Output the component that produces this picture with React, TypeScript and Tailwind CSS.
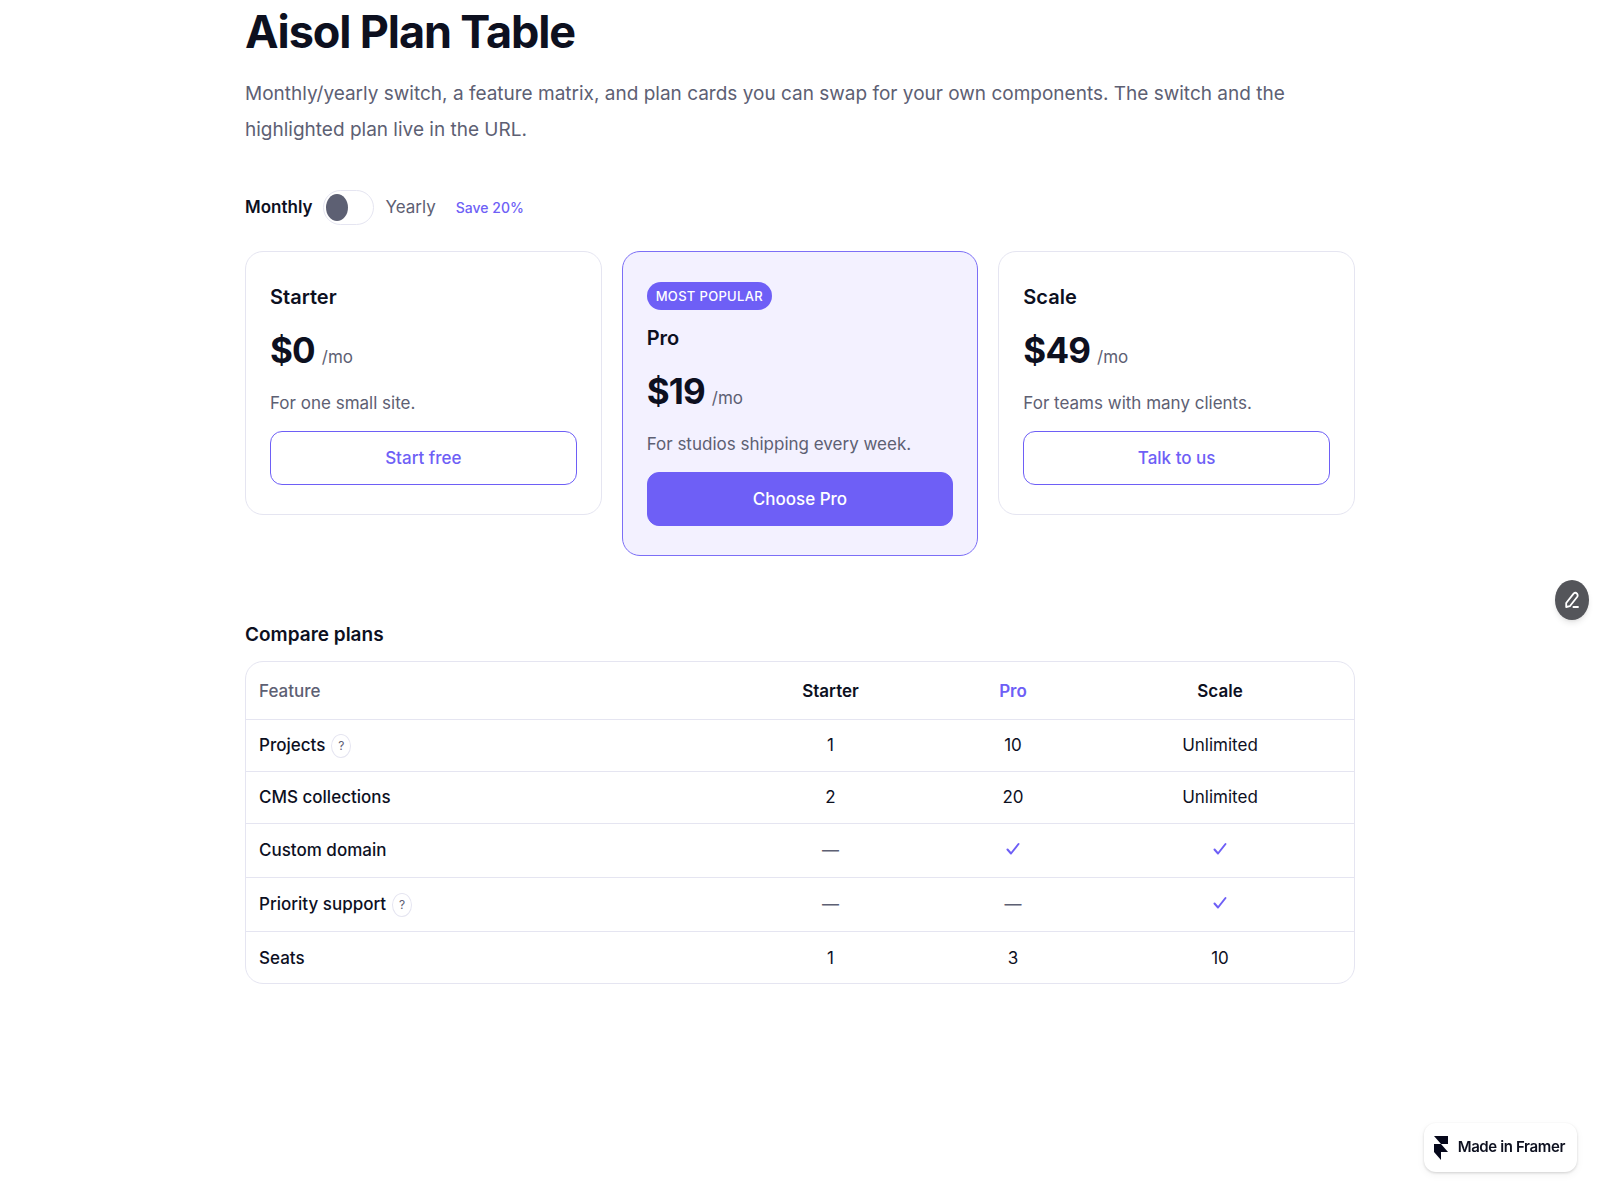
import { useState } from "react";

type Plan = {
  name: string;
  monthly: number;
  blurb: string;
  cta: string;
  popular?: boolean;
};

type Row = {
  feature: string;
  hint?: string;
  values: (string | boolean)[];
};

const PLANS: Plan[] = [
  { name: "Starter", monthly: 0, blurb: "For one small site.", cta: "Start free" },
  { name: "Pro", monthly: 19, blurb: "For studios shipping every week.", cta: "Choose Pro", popular: true },
  { name: "Scale", monthly: 49, blurb: "For teams with many clients.", cta: "Talk to us" },
];

const ROWS: Row[] = [
  { feature: "Projects", hint: "About projects", values: ["1", "10", "Unlimited"] },
  { feature: "CMS collections", values: ["2", "20", "Unlimited"] },
  { feature: "Custom domain", values: [false, true, true] },
  { feature: "Priority support", hint: "About priority support", values: [false, false, true] },
  { feature: "Seats", values: ["1", "3", "10"] },
];

function CheckIcon() {
  return (
    <svg
      width="18"
      height="20"
      viewBox="0 0 18 20"
      className="mx-auto mb-1"
      fill="none"
      stroke="#6e5ff6"
      strokeWidth="2"
      strokeLinecap="round"
      strokeLinejoin="round"
    >
      <path d="M3.5 10.5 7 14.5 14.5 5" />
    </svg>
  );
}

function Cell({ value }: { value: string | boolean }) {
  if (value === true) return <CheckIcon />;
  if (value === false) return <span className="text-[#5d6073]">—</span>;
  return <>{value}</>;
}

function PlanCard({ plan, yearly }: { plan: Plan; yearly: boolean }) {
  const price = yearly ? Math.round(plan.monthly * 0.8) : plan.monthly;
  return (
    <article
      className={`flex flex-col items-start gap-[13px] rounded-[18px] border px-6 pt-[30px] pb-[29px] ${
        plan.popular ? "border-[#7c6ff6] bg-[#f3f1ff]" : "border-[#e5e5f1] bg-white"
      }`}
    >
      {plan.popular && (
        <span className="rounded-[14px] bg-[#6e5ff6] px-[9px] text-[13px] leading-7 font-medium tracking-wide text-white uppercase">
          Most popular
        </span>
      )}
      <h2 className="text-[20px] leading-[30px] font-semibold">{plan.name}</h2>
      <p className="flex items-baseline gap-[7px]">
        <span className="text-[35px] leading-[50px] font-bold tracking-tight">${price}</span>
        <span className="text-[17px] leading-6 text-[#5d6073]">/mo</span>
      </p>
      <p className="text-[17px] leading-[30px] text-[#5d6073]">{plan.blurb}</p>
      <button
        type="button"
        className={`w-full rounded-xl border border-[#6e5ff6] text-[17px] leading-[52px] font-medium ${
          plan.popular ? "bg-[#6e5ff6] text-white" : "text-[#6e5ff6]"
        }`}
      >
        {plan.cta}
      </button>
    </article>
  );
}

export default function App() {
  const [yearly, setYearly] = useState(false);

  return (
    <div className="min-h-screen bg-white font-['Inter',sans-serif] text-[#0d101f]">
      <main className="mx-auto max-w-[1110px]">
        <h1 className="text-[45px] leading-[64px] font-bold tracking-tight">Aisol Plan Table</h1>
        <p className="mt-3 text-[19px] leading-9 text-[#5d6073]">
          Monthly/yearly switch, a feature matrix, and plan cards you can swap for your own components. The switch and
          the highlighted plan live in the URL.
        </p>

        <div className="mt-[42px] flex items-center text-[17px]">
          <span className={yearly ? "text-[#5d6073]" : "font-semibold"}>Monthly</span>
          <input
            type="checkbox"
            role="switch"
            aria-label="Yearly billing"
            checked={yearly}
            onChange={(e) => setYearly(e.target.checked)}
            className="mx-[11px] flex h-[35px] w-[51px] appearance-none items-center rounded-[18px] border border-[#e5e5f1] px-[2px] before:h-[27px] before:w-[22px] before:rounded-[50%] before:bg-[#5d6073] checked:justify-end"
          />
          <span className={yearly ? "font-semibold" : "text-[#5d6073]"}>Yearly</span>
          <span className="ml-5 text-[14px] font-medium text-[#6e5ff6]">Save 20%</span>
        </div>

        <section className="mt-[26px] grid grid-cols-3 items-start gap-5">
          {PLANS.map((plan) => (
            <PlanCard key={plan.name} plan={plan} yearly={yearly} />
          ))}
        </section>

        <section className="mt-16">
          <h2 className="text-[19px] leading-[30px] font-semibold">Compare plans</h2>
          <div className="mt-[11px] overflow-hidden rounded-[18px] border border-[#e5e5f1]">
            <table className="w-full table-fixed border-collapse text-[17px]">
              <thead>
                <tr className="h-[57px]">
                  <th className="w-[475px] px-[13px] pt-[2px] text-left font-medium text-[#5d6073]">Feature</th>
                  <th className="w-[219px] pt-[2px] font-semibold">Starter</th>
                  <th className="w-[146px] pt-[2px] font-semibold text-[#6e5ff6]">Pro</th>
                  <th className="w-[268px] pt-[2px] font-semibold">Scale</th>
                </tr>
              </thead>
              <tbody>
                {ROWS.map((row) => (
                  <tr
                    key={row.feature}
                    className={`border-t border-[#e5e5f1] ${row.values.includes(true) ? "h-[54px]" : "h-[52px]"}`}
                  >
                    <th scope="row" className="px-[13px] pt-[2px] text-left font-medium">
                      <span className="flex items-center gap-[6px]">
                        {row.feature}
                        {row.hint && (
                          <button
                            type="button"
                            aria-label={row.hint}
                            className="h-6 w-5 rounded-[50%] border border-[#e5e5f1] text-[12px] leading-5 font-normal text-[#5d6073]"
                          >
                            ?
                          </button>
                        )}
                      </span>
                    </th>
                    {row.values.map((value, i) => (
                      <td key={i} className="pt-[2px] text-center">
                        <Cell value={value} />
                      </td>
                    ))}
                  </tr>
                ))}
              </tbody>
            </table>
          </div>
        </section>
      </main>

      <button
        type="button"
        aria-label="Edit"
        className="fixed top-[580px] right-[11px] flex h-10 w-[34px] items-center justify-center rounded-[50%] bg-[#54555a] shadow-md"
      >
        <svg
          width="14"
          height="18"
          viewBox="0 0 14 18"
          fill="none"
          stroke="#fff"
          strokeWidth="1.8"
          strokeLinecap="round"
          strokeLinejoin="round"
        >
          <path d="M1.2 12 8.8 2.4Q10.4 0.9 12 2.6 13.3 4.4 12.1 6L4.8 15.2 1.2 16Z" />
          <path d="M8.4 16H13" />
        </svg>
      </button>

      <a
        href="#framer"
        className="fixed right-[23px] bottom-7 flex h-[49px] items-center gap-[10px] rounded-xl bg-white pr-3 pl-[10px] text-[15px] font-semibold tracking-tight shadow-[0_1px_3px_rgba(0,0,0,0.16),0_3px_8px_rgba(0,0,0,0.05)]"
      >
        <svg width="14" height="24" viewBox="0 0 14 24" fill="#05071a">
          <path d="M0 0H14V8H7ZM0 8H7L14 16H7V24L0 16Z" />
        </svg>
        Made in Framer
      </a>
    </div>
  );
}
